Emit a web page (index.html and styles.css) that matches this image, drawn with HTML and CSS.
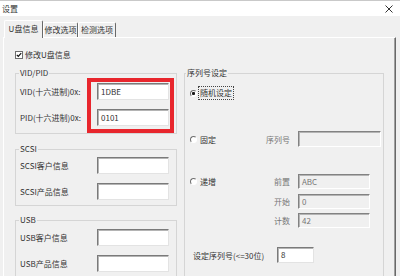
FILE: index.html
```html
<!DOCTYPE html>
<html>
<head>
<meta charset="utf-8">
<link rel="stylesheet" href="styles.css">
</head>
<body>
<div class="titlebar">
  <span class="title">设置</span>
  <svg class="close" width="8" height="8" viewBox="0 0 8 8"><path d="M0.5 0.5L7.5 7.5M7.5 0.5L0.5 7.5" stroke="#333" stroke-width="1" fill="none"/></svg>
</div>
<div class="tabs">
  <div class="tab active t1">U盘信息</div>
  <div class="tab t2">修改选项</div>
  <div class="tab t3">检测选项</div>
</div>
<div class="panel">
  <div class="check"><span class="box"><svg width="6" height="6" viewBox="0 0 6 6"><path d="M0.8 2.8L2.3 4.4L5.2 1.2" stroke="#111" stroke-width="1.2" fill="none"/></svg></span>修改U盘信息</div>
  <div class="cols">
    <div class="left">
      <fieldset class="grp g-vid">
        <legend>VID/PID</legend>
        <div class="frows">
          <span>VID(十六进制)0x:</span><div class="inp">1DBE</div>
          <span>PID(十六进制)0x:</span><div class="inp">0101</div>
        </div>
      </fieldset>
      <fieldset class="grp g-scsi">
        <legend>SCSI</legend>
        <div class="frows">
          <span>SCSI客户信息</span><div class="inp"></div>
          <span>SCSI产品信息</span><div class="inp"></div>
        </div>
      </fieldset>
      <fieldset class="grp g-usb">
        <legend>USB</legend>
        <div class="frows">
          <span>USB客户信息</span><div class="inp"></div>
          <span>USB产品信息</span><div class="inp"></div>
        </div>
      </fieldset>
    </div>
    <fieldset class="grp right">
      <legend>序列号设定</legend>
      <div class="r r1"><span class="rl"><span class="radio on"></span><span class="focus">随机设定</span></span></div>
      <div class="r r2"><span class="rl"><span class="radio"></span>固定</span><span class="sub">序列号</span><div class="inp dis w83"></div></div>
      <div class="r r3"><span class="rl"><span class="radio"></span>递增</span><span class="sub">前置</span><div class="inp dis w72">ABC</div></div>
      <div class="r r4"><span></span><span class="sub">开始</span><div class="inp dis w72">0</div></div>
      <div class="r r5"><span></span><span class="sub">计数</span><div class="inp dis w72">42</div></div>
      <div class="r6"><span class="r6l">设定序列号(&lt;=30位)</span><div class="inp w37">8</div></div>
    </fieldset>
  </div>
</div>
<div class="mark"></div>
</body>
</html>
```
FILE: styles.css
```css
* { box-sizing: border-box; }
html, body { margin: 0; padding: 0; }
body {
  width: 400px; height: 276px; overflow: hidden; position: relative;
  background: #f0f0f0; color: #333;
  font-family: "Noto Sans CJK SC", "Noto Sans", sans-serif; font-size: 8px;
}
.titlebar {
  height: 16px; background: #fff; border-top: 1px solid #c9c9c9;
  display: flex; align-items: center; justify-content: space-between;
  padding: 0 7px 0 2px;
}
.title { line-height: 12px; }
.close { display: block; }
.tabs { height: 21px; display: flex; align-items: flex-end; padding-left: 4px; }
.tab {
  height: 15px; border-top: 1px solid #fff; border-left: 1px solid #fff;
  border-right: 1px solid #696969; border-radius: 2px 2px 0 0;
  text-align: center; line-height: 14px; white-space: nowrap;
}
.tab.active {
  height: 18px; margin-bottom: -1px; position: relative; z-index: 1;
  background: #f0f0f0; line-height: 16px;
}
.t1 { width: 39px; }
.t2 { width: 35px; }
.t3 { width: 38px; }
.panel {
  height: 239px; margin: 0 4px 0 3px;
  border-top: 1px solid #fff; border-left: 1px solid #fff; border-right: 1px solid #696969;
  box-shadow: inset -1px 0 #a0a0a0;
  padding: 12px 0 0 11px;
}
.check { display: flex; align-items: center; height: 10px; line-height: 10px; }
.box {
  width: 8px; height: 8px; border: 1px solid #6e6e6e; background: #fff;
  margin-right: 2px; display: flex; align-items: center; justify-content: center;
}
.box svg { display: block; }
.cols { display: flex; gap: 7px; margin-top: 8px; align-items: flex-start; }
.left { width: 162px; display: flex; flex-direction: column; }
.grp { margin: 0; min-width: 0; border: 1px solid #d5d5d5; padding: 0 0 0 4px; }
.grp legend { padding: 0 1px; margin-left: -1px; line-height: 10px; }
.g-vid { padding-top: 5px; padding-bottom: 7px; }
.g-scsi { margin-top: 10px; padding-top: 3px; padding-bottom: 5px; }
.g-usb { margin-top: 9px; padding-top: 4px; padding-bottom: 10px; }
.frows { display: grid; grid-template-columns: 77px 72px; row-gap: 9px; align-items: center; white-space: nowrap; }
.inp {
  height: 17px; width: 72px; background: #fff; padding-left: 3px;
  border: 1px solid; border-color: #7a7a7a #e3e3e3 #e3e3e3 #7a7a7a;
  box-shadow: inset 1px 1px 0 #b4b4b4;
  display: flex; align-items: center; line-height: 10px;
}
.inp.dis { background: #f0f0f0; color: #777; border-color: #828282 #fff #fff #828282; }
.w83 { width: 83px; }
.w72 { width: 72px; }
.w37 { width: 37px; }
.right { width: 200px; padding: 0 0 20px 5px; }
.right legend { margin-left: -4px; }
.r { display: grid; grid-template-columns: 72px 30px auto; align-items: center; }
.r .inp { height: 100%; margin-left: 6px; }
.r1 { margin-top: 7px; height: 16px; }
.r2 { margin-top: 30px; height: 16px; }
.r3 { margin-top: 27px; height: 15px; }
.r4 { margin-top: 5px; height: 15px; }
.r5 { margin-top: 4px; height: 15px; }
.r6 { margin-top: 19px; height: 16px; display: flex; align-items: center; padding-left: 3px; }
.r6l { width: 84px; white-space: nowrap; }
.r6 .inp { height: 16px; }
.rl { display: flex; align-items: center; gap: 3px; white-space: nowrap; }
.radio {
  width: 7px; height: 7px; border-radius: 50%; background: #fff;
  border: 1px solid; border-color: #6e6e6e #fff #fff #6e6e6e;
}
.radio.on { background: radial-gradient(circle, #1a1a1a 0 1.3px, #fff 1.8px); }
.focus { outline: 1px dotted #444; outline-offset: 1px; line-height: 10px; }
.sub { color: #777; text-align: right; padding-right: 2px; white-space: nowrap; }
.mark {
  position: absolute; left: 87px; top: 78px; width: 87px; height: 55px;
  border: 4px solid #e8262d;
}
```
